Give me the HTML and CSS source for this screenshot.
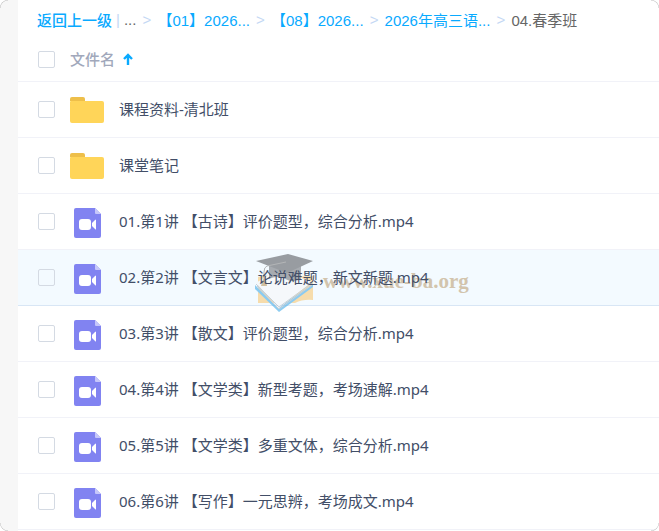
FILE: index.html
```html
<!doctype html>
<html lang="zh-CN">
<head>
<meta charset="utf-8">
<meta name="viewport" content="width=device-width,initial-scale=1">
<title>04.春季班</title>
<link rel="stylesheet" href="styles.css">
</head>
<body>

<!-- shared icons -->
<svg class="defs" aria-hidden="true">
  <symbol id="folder" viewBox="0 0 34 27">
    <path d="M0 5a1 1 0 0 1 1-1h31a2 2 0 0 1 2 2v18a2 2 0 0 1-2 2H2a2 2 0 0 1-2-2z" fill="#ffd559"/>
    <path d="M0 4V2a2 2 0 0 1 2-2h11a2 2 0 0 1 2 2v2z" fill="#eebf4a"/>
  </symbol>
  <symbol id="video" viewBox="0 0 27 30">
    <path d="M2 0h19l6 6v22a2 2 0 0 1-2 2H2a2 2 0 0 1-2-2V2a2 2 0 0 1 2-2z" fill="#8183f1"/>
    <path d="M21 0l6 6h-5a1 1 0 0 1-1-1z" fill="#c6c7fa"/>
    <rect x="5" y="11" width="12" height="11" rx="3" fill="#fff"/>
    <path d="M18 15l3-3q1-1 1 0v9q0 1-1 0l-3-3z" fill="#fff"/>
  </symbol>
</svg>

<div class="window">
  <main class="panel">
    <nav class="crumbs">
      <a href="#" class="back">返回上一级</a><span class="bar">|</span><span class="dots">...</span>
      <span class="sep">&gt;</span><a href="#">【01】2026...</a>
      <span class="sep">&gt;</span><a href="#">【08】2026...</a>
      <span class="sep">&gt;</span><a href="#">2026年高三语...</a>
      <span class="sep">&gt;</span><span class="current">04.春季班</span>
    </nav>

    <table class="files">
      <thead>
        <tr>
          <th class="check"><input type="checkbox" aria-label="全选"></th>
          <th colspan="2" class="name">文件名
            <svg class="sort" viewBox="0 0 10 12"><path d="M5 12V2M1 6l4-4 4 4" fill="none" stroke="#09aaff" stroke-width="2.4"/></svg>
          </th>
        </tr>
      </thead>
      <tbody>
        <tr>
          <td class="check"><input type="checkbox" id="f1"></td>
          <td class="icon"><svg class="folder"><use href="#folder"/></svg></td>
          <td class="title"><label for="f1">课程资料-清北班</label></td>
        </tr>
        <tr>
          <td class="check"><input type="checkbox" id="f2"></td>
          <td class="icon"><svg class="folder"><use href="#folder"/></svg></td>
          <td class="title"><label for="f2">课堂笔记</label></td>
        </tr>
        <tr>
          <td class="check"><input type="checkbox" id="f3"></td>
          <td class="icon"><svg class="video"><use href="#video"/></svg></td>
          <td class="title"><label for="f3">01.第1讲 【古诗】评价题型，综合分析.mp4</label></td>
        </tr>
        <tr class="active">
          <td class="check"><input type="checkbox" id="f4"></td>
          <td class="icon"><svg class="video"><use href="#video"/></svg></td>
          <td class="title"><label for="f4">02.第2讲 【文言文】论说难题，新文新题.mp4</label></td>
        </tr>
        <tr>
          <td class="check"><input type="checkbox" id="f5"></td>
          <td class="icon"><svg class="video"><use href="#video"/></svg></td>
          <td class="title"><label for="f5">03.第3讲 【散文】评价题型，综合分析.mp4</label></td>
        </tr>
        <tr>
          <td class="check"><input type="checkbox" id="f6"></td>
          <td class="icon"><svg class="video"><use href="#video"/></svg></td>
          <td class="title"><label for="f6">04.第4讲 【文学类】新型考题，考场速解.mp4</label></td>
        </tr>
        <tr>
          <td class="check"><input type="checkbox" id="f7"></td>
          <td class="icon"><svg class="video"><use href="#video"/></svg></td>
          <td class="title"><label for="f7">05.第5讲 【文学类】多重文体，综合分析.mp4</label></td>
        </tr>
        <tr>
          <td class="check"><input type="checkbox" id="f8"></td>
          <td class="icon"><svg class="video"><use href="#video"/></svg></td>
          <td class="title"><label for="f8">06.第6讲 【写作】一元思辨，考场成文.mp4</label></td>
        </tr>
      </tbody>
    </table>
  </main>

  <div class="watermark">
    <svg viewBox="0 0 60 58">
      <path d="M3 23q8-3 16 0l39-1v24q-10-1-18 3H3z" fill="#f8d08a"/>
      <path d="M0 31l23 23 35-24v3L24 58 0 35z" fill="#5fb8ec"/>
      <path d="M1 29l22-14 34 13-33 26z" fill="#f6f8fa"/>
      <path d="M1 30l23 23 33-24M2 32l22 23 33-24" fill="none" stroke="#b4bfc9"/>
      <path d="M14 12v13q8-4 16 0t16 0V12z" fill="#888b90"/>
      <path d="M1 7L33 0l25 7-26 12z" fill="#72757a"/>
      <path d="M31 8L12 12q-3 1-3 6v8" fill="none" stroke="#999"/>
      <path d="M8 25h3l1 7H6z" fill="#c4a878"/>
    </svg>
    <span>www.xue-ba.org</span>
  </div>
</div>

</body>
</html>
```
FILE: styles.css
```css
*{box-sizing:border-box}
body{margin:0;background:#fff;color:#424e67;font-family:"Noto Sans","Noto Sans CJK SC",sans-serif;font-size:15px}
a{color:#09aaff;text-decoration:none}
.defs{display:none}
.window{position:relative;min-height:100vh;padding-left:18px;background:#f7f7f7;border-radius:8px;overflow:hidden}
.panel{min-height:100vh;background:#fff}

/* thin grey edge on the rounded corners only */
.window::after{
  content:"";position:absolute;inset:0;pointer-events:none;
  background:
    radial-gradient(circle at 100% 100%,transparent 7px,#bbb 8px,transparent 9px) left top/8px 8px no-repeat,
    radial-gradient(circle at 0 100%,transparent 7px,#bbb 8px,transparent 9px) right top/8px 8px no-repeat,
    radial-gradient(circle at 100% 0,transparent 7px,#bbb 8px,transparent 9px) left bottom/8px 8px no-repeat,
    radial-gradient(circle at 0 0,transparent 7px,#bbb 8px,transparent 9px) right bottom/8px 8px no-repeat;
}

.crumbs{display:flex;align-items:center;height:39px;padding-left:19px;white-space:nowrap;font-family:"Liberation Sans","Noto Sans CJK SC",sans-serif}
.back{font-weight:500}
.bar{color:#c4d8f4;margin:0 4px}
.dots,.current{color:#666}
.sep{color:#c4d8f4;width:21px;text-align:center}

.files{width:100%;border-collapse:collapse}
th,td{padding:0;text-align:left;border-bottom:1px solid #f1f2f8}
td{height:56px}
th{height:42px}
.check{width:52px;padding-left:20px}
.name{color:#a1a8bb;font-weight:500;padding-bottom:2px}
.icon{width:49px;padding-top:2px}
.icon svg{display:block}
.title{padding-bottom:2px}
.title label{position:relative;z-index:1}
.folder{width:34px;height:27px}
.video{width:27px;height:30px;margin:2px 0 0 4px}
.sort{width:10px;height:12px;margin-left:4px}
.active td{background:#f3faff;border-top:1px solid #d8e6f5;border-bottom-color:#d8e6f5}
input{appearance:none;display:block;width:17px;height:17px;margin:0;border:1px solid #d4dae3;border-radius:2px;background:transparent}

.watermark{position:absolute;left:255px;top:254px;display:flex;align-items:center;opacity:.7;pointer-events:none}
.watermark svg{width:60px;height:58px}
.watermark span{margin-left:8px;padding-bottom:4px;font:bold 21px "Liberation Serif",serif;color:#c5ae8b}
```
